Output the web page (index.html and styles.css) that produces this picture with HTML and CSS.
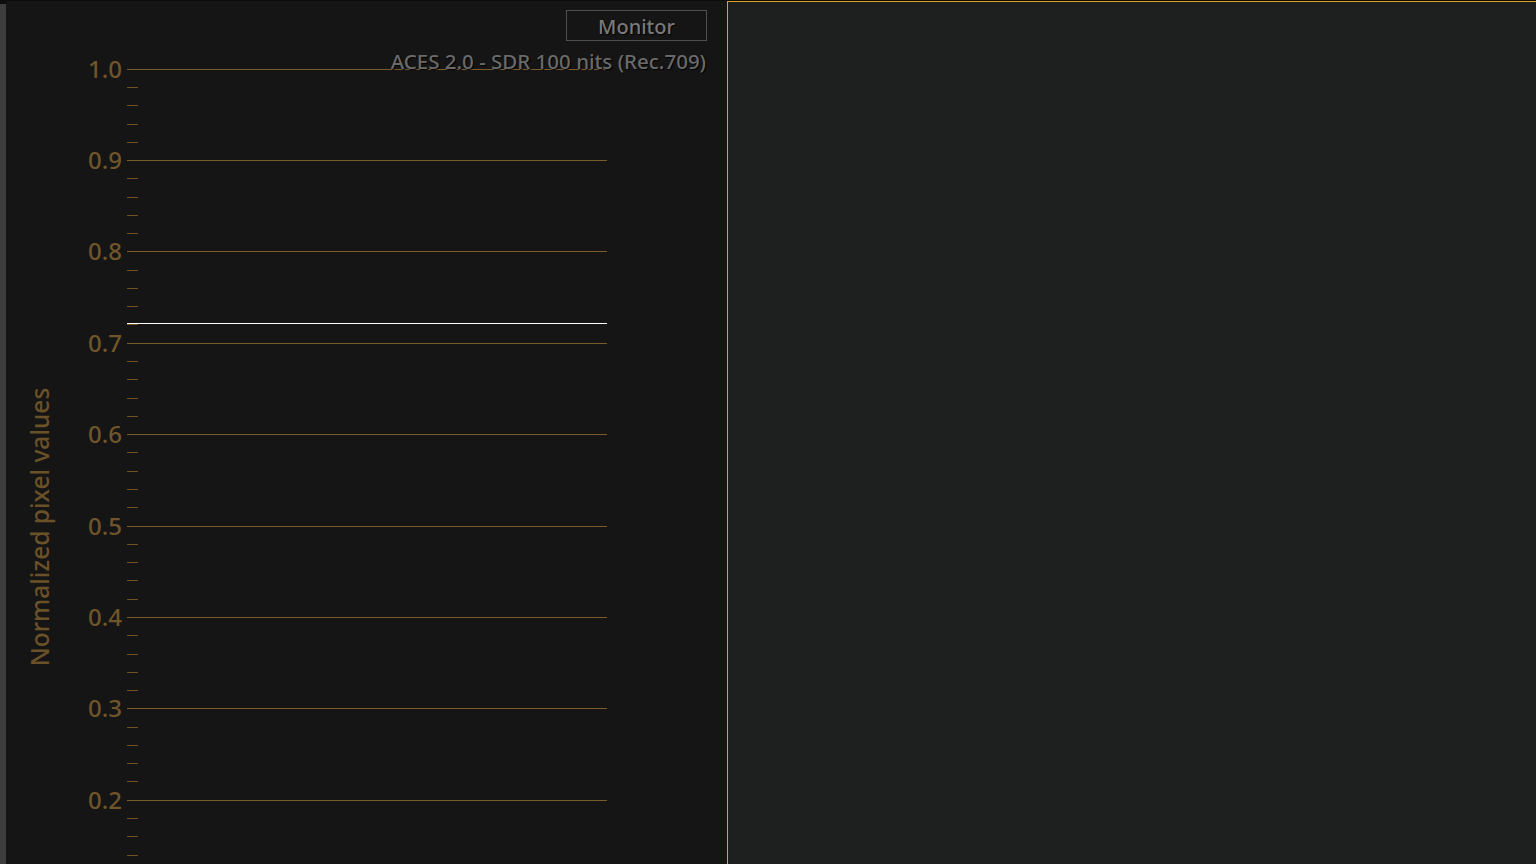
FILE: index.html
```html
<!DOCTYPE html>
<html lang="en">

<head>
  <meta charset="UTF-8" />
  <meta name="viewport" content="width=device-width, initial-scale=1.0" />
  <title>Scope</title>
  <link rel="stylesheet" href="styles.css">
</head>

<body>
  <div class="app">
    <div class="strip"></div>

    <div class="plot">
      <button class="monitor">Monitor</button>

      <svg class="chart" width="721" height="863" viewBox="0 1 721 863">
        <text class="axis-title" transform="translate(33 527) rotate(-90)">Normalized pixel values</text>

        <!-- major lines -->
        <path class="major" d="M121 69.5H601M121 160.5H601M121 251.5H601M121 343.5H601M121 434.5H601M121 526.5H601M121 617.5H601M121 708.5H601M121 800.5H601" />

        <!-- minor ticks, every 0.02 -->
        <path class="minor" d="M121 87.5h11M121 105.5h11M121 124.5h11M121 142.5h11
          M121 178.5h11M121 197.5h11M121 215.5h11M121 233.5h11
          M121 270.5h11M121 288.5h11M121 306.5h11M121 324.5h11
          M121 361.5h11M121 379.5h11M121 398.5h11M121 416.5h11
          M121 452.5h11M121 471.5h11M121 489.5h11M121 507.5h11
          M121 544.5h11M121 562.5h11M121 580.5h11M121 599.5h11
          M121 635.5h11M121 654.5h11M121 672.5h11M121 690.5h11
          M121 727.5h11M121 745.5h11M121 763.5h11M121 781.5h11
          M121 818.5h11M121 836.5h11M121 855.5h11" />

        <g class="labels">
          <text x="116" y="68">1.0</text>
          <text x="116" y="159">0.9</text>
          <text x="116" y="250">0.8</text>
          <text x="116" y="342">0.7</text>
          <text x="116" y="433">0.6</text>
          <text x="116" y="525">0.5</text>
          <text x="116" y="616">0.4</text>
          <text x="116" y="707">0.3</text>
          <text x="116" y="799">0.2</text>
        </g>

        <!-- current value -->
        <path class="value" d="M121 323.5H601" />

        <text class="transform" x="700" y="69">ACES 2.0 - SDR 100 nits (Rec.709)</text>
      </svg>
    </div>

    <div class="viewer"></div>
  </div>
</body>

</html>
```

FILE: styles.css
```css
body {
  margin: 0;
  background-color: #0d0d0d;
  font-family: "Noto Sans", "Open Sans", sans-serif;
  overflow: hidden;
}

.app {
  display: flex;
  height: 864px;
}

.strip {
  width: 6px;
  margin-top: 4px;
  background-color: #3d3d3d;
}

.plot {
  position: relative;
  width: 721px;
  margin-top: 1px;
  background-color: #151515;
}

.chart {
  display: block;
}

.monitor {
  position: absolute;
  top: 9px;
  left: 560px;
  width: 141px;
  height: 31px;
  padding: 2px 0 0;
  background: transparent;
  border: 1px solid #4f4f4f;
  color: #7a7a7a;
  font-family: "Noto Sans", "Open Sans", sans-serif;
  font-size: 20px;
  font-weight: 500;
  text-shadow: 1px 1px 1px #000;
}

.major {
  stroke: #7a5b29;
  stroke-width: 1;
}

.minor {
  stroke: #6e5226;
  stroke-width: 1;
}

.value {
  stroke: #ffffff;
  stroke-width: 1.2;
}

.labels text {
  fill: #6f5529;
  font-size: 24px;
  font-weight: 500;
  text-anchor: end;
  dominant-baseline: central;
}

.axis-title {
  fill: #6b5128;
  font-size: 24.5px;
  font-weight: 500;
  text-anchor: middle;
  dominant-baseline: central;
}

.transform {
  fill: #6a6a6a;
  font-size: 20.5px;
  font-weight: 500;
  text-anchor: end;
  text-shadow: 1px 1px 1px #000;
}

.viewer {
  flex: 1;
  margin-top: 1px;
  background-color: #1e1f1f;
  border-left: 1px solid #dba322;
  border-top: 1px solid #dba322;
}
```
